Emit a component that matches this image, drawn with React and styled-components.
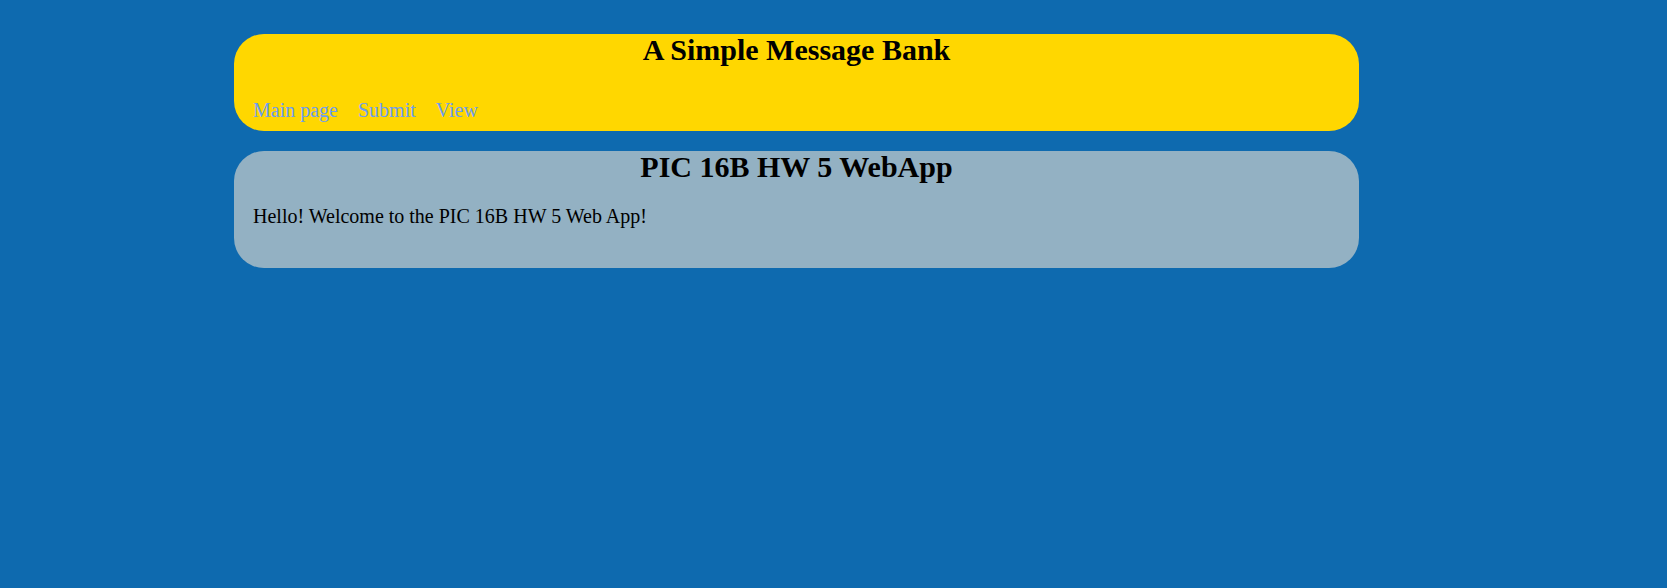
import React from "react";
import styled, { createGlobalStyle } from "styled-components";

const GlobalStyle = createGlobalStyle`
  html, body {
    margin: 0;
    padding: 0;
    background: #0e6aaf;
    font-family: "Liberation Serif", "Times New Roman", serif;
  }
`;

const Page = styled.div`
  min-height: 588px;
  box-sizing: border-box;
  padding: 34px 0 0 234px;
  display: flex;
  flex-direction: column;
  gap: 20px;
`;

const Panel = styled.section`
  width: 1125px;
  box-sizing: border-box;
  border-radius: 30px;
  background: ${(p) => p.$bg};
  padding: ${(p) => p.$pad};
  display: flex;
  flex-direction: column;
`;

const Title = styled.h1`
  margin: -1px 0 0 0;
  font-size: 30px;
  line-height: 34px;
  font-weight: bold;
  text-align: center;
  color: #000;
`;

const Nav = styled.nav`
  display: flex;
  gap: 20px;
  margin-top: 32px;
  padding-left: 19px;
`;

const NavLink = styled.a`
  font-size: 20px;
  line-height: 23px;
  color: #6d9df0;
  text-decoration: none;
`;

const Text = styled.p`
  margin: 21px 0 0 19px;
  font-size: 20px;
  line-height: 23px;
  color: #000;
`;

export default function App() {
  return (
    <>
      <GlobalStyle />
      <Page>
        <Panel $bg="#ffd700" $pad="0 0 9px 0">
          <Title>A Simple Message Bank</Title>
          <Nav>
            <NavLink href="#">Main page</NavLink>
            <NavLink href="#">Submit</NavLink>
            <NavLink href="#">View</NavLink>
          </Nav>
        </Panel>
        <Panel $bg="#93b1c3" $pad="0 0 40px 0">
          <Title>PIC 16B HW 5 WebApp</Title>
          <Text>Hello! Welcome to the PIC 16B HW 5 Web App!</Text>
        </Panel>
      </Page>
    </>
  );
}
